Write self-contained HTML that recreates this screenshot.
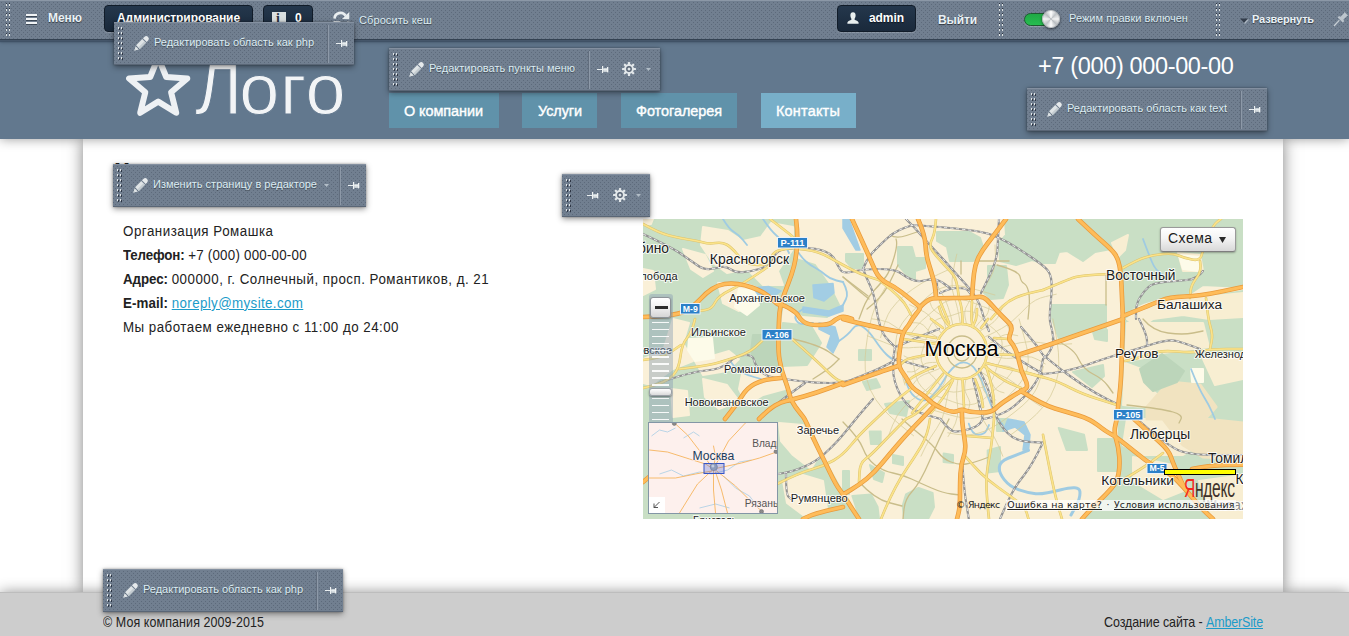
<!DOCTYPE html>
<html lang="ru">
<head>
<meta charset="utf-8">
<title>Контакты</title>
<style>
*{box-sizing:border-box;margin:0;padding:0}
html,body{width:1349px;height:636px;overflow:hidden;background:#fff}
body{position:relative;font-family:"Liberation Sans",sans-serif;color:#222}
.abs{position:absolute}
.t{position:absolute;white-space:nowrap;line-height:1;display:block}
/* dotted admin texture */
.tex{background-color:#717f90;
 background-image:conic-gradient(from 270deg at 1px 1px,#5d6a7b 90deg,transparent 0),conic-gradient(from 270deg at 1px 1px,#5d6a7b 90deg,transparent 0);
 background-size:4px 4px,4px 4px}
/* site header */
#hdr{left:0;top:0;width:1349px;height:139px;background:#62788e;box-shadow:0 0 11px rgba(0,0,0,.4)}
#wrap{left:83px;top:139px;width:1200px;height:453px;background:#fff;box-shadow:0 0 15px rgba(0,0,0,.5)}
#foot{left:0;top:592px;width:1349px;height:44px;background:#cdcdcd;border-top:1px solid #bdbdbd;box-shadow:0 0 14px rgba(0,0,0,.42)}
/* top admin panel */
#panel{left:0;top:0;width:1349px;height:39px;background-position:1px 1px,3px 3px;border-top:1px solid #8c98a7;box-shadow:0 1px 0 #344252,0 2px 0 #45566a,0 3px 1px rgba(60,78,98,.8),0 4px 3px rgba(60,78,98,.5)}
.hd{position:absolute;width:5px;
 background-image:linear-gradient(#e2e6e8 2px,transparent 2px),linear-gradient(#e2e6e8 2px,transparent 2px),linear-gradient(#2e3644 2px,transparent 2px),linear-gradient(#2e3644 2px,transparent 2px);
 background-size:1px 5px;background-repeat:repeat-y;background-position:0 0,3px 0,1px 1px,4px 1px}
.ph{position:absolute;width:4px;top:2px;height:35px;
 background-image:linear-gradient(#2f3845 1px,#dfe4e4 1px,#dfe4e4 3px,transparent 3px),linear-gradient(#2f3845 1px,#dfe4e4 1px,#dfe4e4 3px,transparent 3px);
 background-size:1px 5px;background-repeat:repeat-y;background-position:0 0,3px 0}
.btn{position:absolute;border-radius:4px;background:linear-gradient(#24374c,#1a293b);border:1px solid #111c29;box-shadow:0 1px 0 rgba(255,255,255,.18)}
.pb{font-weight:bold;font-size:12px;color:#e9f1f6;text-shadow:0 1px 1px rgba(0,0,0,.55)}
.pr{font-size:11px;color:#dcecf3;text-shadow:0 1px 1px rgba(0,0,0,.45)}
/* floating toolbars */
.tb{position:absolute;height:43px;border-top:1px solid #8490a0;border-bottom:1px solid #5a6676;box-shadow:0 2px 6px rgba(0,0,0,.42),0 0 2px rgba(0,0,0,.3);background-position:0 1px,2px 3px}
.tb .sep{position:absolute;top:2px;width:2px;height:38px;background:linear-gradient(90deg,#626e7e 50%,#8d99a8 50%)}
.tb .lbl{position:absolute;top:12px;font-size:11px;color:#dcecf3;white-space:nowrap;line-height:14px;text-shadow:0 1px 1px rgba(0,0,0,.4)}
svg{position:absolute;overflow:visible}
/* site */
.nav{position:absolute;top:93px;height:35px;background:#6092aa;color:#fff;font-size:15.2px;-webkit-text-stroke:.4px #fff}
.nav span{position:absolute;top:9px;white-space:nowrap;line-height:17px;transform:scaleX(.95);transform-origin:0 0}
.ct{position:absolute;left:123px;font-size:15.5px;line-height:16px;transform:scaleX(.86);transform-origin:0 0;white-space:nowrap;color:#222}
.ct b{font-weight:bold}
a{color:#1b9bc9;text-decoration:underline}
</style>
<style id="fit">#p1{letter-spacing:-0.043px}
#p2{letter-spacing:-0.075px}
#p3{letter-spacing:0.312px}
#p4{letter-spacing:0.098px}
#p5{letter-spacing:-0.069px}
#p6{letter-spacing:-0.109px}
#p7{letter-spacing:0.042px}
#p8{letter-spacing:-0.142px}
#t1{letter-spacing:-0.008px}
#t2{letter-spacing:0.019px}
#t3{letter-spacing:0.013px}
#t4{letter-spacing:-0.006px}
#t6{letter-spacing:-0.008px}
#n1{letter-spacing:-0.061px}
#n2{letter-spacing:-0.067px}
#n3{letter-spacing:-0.040px}
#n4{letter-spacing:0.220px}
#phone{letter-spacing:-0.353px}
#c1{letter-spacing:0.604px}
#c2b{letter-spacing:-0.178px}
#c2s{letter-spacing:0.265px}
#c3b{letter-spacing:-0.063px}
#c3s{letter-spacing:0.579px}
#c4b{letter-spacing:0.091px}
#c4s{letter-spacing:0.448px}
#c5{letter-spacing:0.559px}
#f1{letter-spacing:0.105px}
#f2a{letter-spacing:-0.099px}
#f2b{letter-spacing:-0.158px}
#logo2{letter-spacing:0.745px}
#m1{letter-spacing:0.469px}
#m3{letter-spacing:-0.697px}
#m4{letter-spacing:0.254px}
#m5{letter-spacing:0.151px}</style>
</head>
<body>
<div id="wrap" class="abs"></div>
<div id="hdr" class="abs"></div>
<div id="foot" class="abs"></div>

<!-- site header content -->
<svg id="star" style="left:126px;top:53px" width="65" height="64" viewBox="0 0 65 64"><path d="M32.2 4.4 L40.2 24.0 L61.3 25.5 L45.1 39.2 L50.2 59.8 L32.2 48.6 L14.2 59.8 L19.3 39.2 L3.1 25.5 L24.2 24.0 Z" fill="none" stroke="#eef1f4" stroke-width="6" stroke-linejoin="round"/></svg>
<div id="logo" class="t" style="left:195px;top:49px;font-size:72px;line-height:80px;color:#f2f4f6;-webkit-text-stroke:1px #62788e"><span style="letter-spacing:-3px">Л</span><span id="logo2">ого</span></div>
<div class="nav" style="left:389px;width:110px"><span id="n1" style="left:15px">О компании</span></div>
<div class="nav" style="left:522px;width:75px"><span id="n2" style="left:16px">Услуги</span></div>
<div class="nav" style="left:621px;width:116px"><span id="n3" style="left:15px">Фотогалерея</span></div>
<div class="nav" style="left:761px;width:95px;background:#78afc9"><span id="n4" style="left:15px">Контакты</span></div>
<div id="phone" class="t" style="left:1038px;top:52px;font-size:23.5px;line-height:28px;color:#fff">+7 (000) 000-00-00</div>

<!-- content -->
<div id="h1" class="t" style="left:114px;top:158px;font-size:25px;font-weight:bold;line-height:28px;color:#222">Контакты</div>
<div class="ct" id="c1" style="top:223px">Организация Ромашка</div>
<div class="ct" id="c2" style="top:247px"><b id="c2b">Телефон:</b> <span id="c2s">+7 (000) 000-00-00</span></div>
<div class="ct" id="c3" style="top:271px"><b id="c3b">Адрес:</b> <span id="c3s">000000, г. Солнечный, просп. Романтиков, д. 21</span></div>
<div class="ct" id="c4" style="top:295px"><b id="c4b">E-mail:</b> <a id="c4s">noreply@mysite.com</a></div>
<div class="ct" id="c5" style="top:319px">Мы работаем ежедневно с 11:00 до 24:00</div>

<!-- MAP -->
<div id="map" class="abs" style="left:643px;top:219px;width:600px;height:300px;background:#faf0d8;overflow:hidden"><svg width="600" height="300" viewBox="0 0 600 300" style="left:0;top:0">
<rect width="600" height="300" fill="#faf0d8"/>
<polygon points="0,0 150,0 153,39 141,74 137,100 135,131 138,150 148,182 162,200 181,241 200,275 214,300 0,300" fill="#c9dfc5" stroke="#c9dfc5" stroke-width="3" stroke-linejoin="round"/>
<polygon points="0,0 10,0 8,5 0,6" fill="#faf0d8" stroke="#faf0d8" stroke-width="2" stroke-linejoin="round"/>
<polygon points="60,8 85,12 100,22 118,18 128,4 150,8 150,30 135,52 140,66 120,66 104,50 84,54 70,44 58,26" fill="#faf0d8" stroke="#faf0d8" stroke-width="2" stroke-linejoin="round"/>
<polygon points="40,30 62,36 70,52 60,58 48,50" fill="#faf0d8" stroke="#faf0d8" stroke-width="2" stroke-linejoin="round"/>
<polygon points="75,64 100,64 118,70 110,84 96,92 80,84" fill="#faf0d8" stroke="#faf0d8" stroke-width="2" stroke-linejoin="round"/>
<polygon points="0,50 10,52 12,70 0,76" fill="#faf0d8" stroke="#faf0d8" stroke-width="2" stroke-linejoin="round"/>
<polygon points="30,100 46,104 40,124 50,142 30,150 8,166 0,164 0,140 20,132" fill="#faf0d8" stroke="#faf0d8" stroke-width="2" stroke-linejoin="round"/>
<polygon points="52,142 86,132 96,140 84,152 60,156" fill="#faf0d8" stroke="#faf0d8" stroke-width="2" stroke-linejoin="round"/>
<polygon points="60,160 84,166 96,182 76,190 62,178" fill="#faf0d8" stroke="#faf0d8" stroke-width="2" stroke-linejoin="round"/>
<polygon points="100,150 134,150 142,170 120,176 104,186 96,170" fill="#faf0d8" stroke="#faf0d8" stroke-width="2" stroke-linejoin="round"/>
<polygon points="136,204 160,206 176,236 168,250 150,236 138,222" fill="#faf0d8" stroke="#faf0d8" stroke-width="2" stroke-linejoin="round"/>
<polygon points="140,262 160,256 180,262 184,290 160,296 144,284" fill="#faf0d8" stroke="#faf0d8" stroke-width="2" stroke-linejoin="round"/>
<polygon points="28,170 44,172 46,196 30,198" fill="#faf0d8" stroke="#faf0d8" stroke-width="2" stroke-linejoin="round"/>
<polygon points="153,40 172,46 186,66 196,86 184,98 160,96 141,86 141,74" fill="#c9dfc5" stroke="#c9dfc5" stroke-width="2" stroke-linejoin="round"/>
<polygon points="140,104 168,107 178,124 164,146 138,147 135,131" fill="#c9dfc5" stroke="#c9dfc5" stroke-width="2" stroke-linejoin="round"/>
<polygon points="203,35 220,35 220,49 209,49 203,42" fill="#c9dfc5" stroke="#c9dfc5" stroke-width="2" stroke-linejoin="round"/>
<polygon points="255,28 269,28 272,39 282,39 282,49 272,52 272,61 263,55 255,46" fill="#c9dfc5" stroke="#c9dfc5" stroke-width="2" stroke-linejoin="round"/>
<polygon points="294,13 326,13 337,19 341,31 330,42 307,42 304,28 294,22" fill="#c9dfc5" stroke="#c9dfc5" stroke-width="2" stroke-linejoin="round"/>
<polygon points="345,47 363,47 365,66 360,79 348,80 341,74 345,60" fill="#c9dfc5" stroke="#c9dfc5" stroke-width="2" stroke-linejoin="round"/>
<polygon points="362,0 600,0 600,68 560,66 548,74 526,76 500,84 482,92 479,60 475,39 468,30 452,33 440,42 424,32 416,33 412,44 400,44 389,41 373,46 357,42 356,24 363,16" fill="#c9dfc5" stroke="#c9dfc5" stroke-width="2" stroke-linejoin="round"/>
<polygon points="409,86 463,86 463,109 416,120 409,100" fill="#c9dfc5" stroke="#c9dfc5" stroke-width="2" stroke-linejoin="round"/>
<polygon points="450,113 464,111 464,122 452,120" fill="#c9dfc5" stroke="#c9dfc5" stroke-width="2" stroke-linejoin="round"/>
<polygon points="430,153 460,146 461,157 449,168" fill="#c9dfc5" stroke="#c9dfc5" stroke-width="2" stroke-linejoin="round"/>
<polygon points="216,131 228,131 228,141 216,141" fill="#c9dfc5" stroke="#c9dfc5" stroke-width="2" stroke-linejoin="round"/>
<polygon points="242,185 266,182 263,197 247,194" fill="#c9dfc5" stroke="#c9dfc5" stroke-width="2" stroke-linejoin="round"/>
<polygon points="220,163 233,160 237,168 224,171" fill="#c9dfc5" stroke="#c9dfc5" stroke-width="2" stroke-linejoin="round"/>
<polygon points="263,275.5 275.5,269 289.6,274 291,288 285,300 261,300 259.7,286.5" fill="#c9dfc5" stroke="#c9dfc5" stroke-width="2" stroke-linejoin="round"/>
<polygon points="200,252 206,252 206,275 200,275" fill="#c9dfc5" stroke="#c9dfc5" stroke-width="2" stroke-linejoin="round"/>
<polygon points="209.4,277 228,275.5 234.6,288 236,300 217,300" fill="#c9dfc5" stroke="#c9dfc5" stroke-width="2" stroke-linejoin="round"/>
<polygon points="226.7,212.6 237.7,212.6 237.7,225 228,225" fill="#c9dfc5" stroke="#c9dfc5" stroke-width="2" stroke-linejoin="round"/>
<polygon points="250,236 260,238 260,246 250,244" fill="#c9dfc5" stroke="#c9dfc5" stroke-width="2" stroke-linejoin="round"/>
<polygon points="227,246 241,254 239,263 231,260" fill="#c9dfc5" stroke="#c9dfc5" stroke-width="2" stroke-linejoin="round"/>
<polygon points="300.6,234.6 310,236 310,244 300.6,243" fill="#c9dfc5" stroke="#c9dfc5" stroke-width="2" stroke-linejoin="round"/>
<polygon points="344.7,231.4 357,228 357,252 344.7,253.5" fill="#c9dfc5" stroke="#c9dfc5" stroke-width="2" stroke-linejoin="round"/>
<polygon points="354,200 364,200 364,212 354,212" fill="#c9dfc5" stroke="#c9dfc5" stroke-width="2" stroke-linejoin="round"/>
<polygon points="482,92 600,72 600,300 440,300 447,291 463,275.5 474,263 477,247 475,188 478,163 479,131" fill="#c9dfc5" stroke="#c9dfc5" stroke-width="2" stroke-linejoin="round"/>
<polygon points="455,220 488,220 488,247 477,252 455,252" fill="#c9dfc5" stroke="#c9dfc5" stroke-width="2" stroke-linejoin="round"/>
<polygon points="415.7,209 441,215.7 444,231 423.6,231" fill="#c9dfc5" stroke="#c9dfc5" stroke-width="2" stroke-linejoin="round"/>
<polygon points="570,100 600,100 600,128 573,128" fill="#c9dfc5" stroke="#c9dfc5" stroke-width="2" stroke-linejoin="round"/>
<polygon points="469,24 485,16 482,31 475,38" fill="#f8eed2" stroke="#f8eed2" stroke-width="2" stroke-linejoin="round"/>
<polygon points="500,88 560,78 600,74 600,98 566,100 540,96 510,100 496,110 484,100" fill="#f8eed2" stroke="#f8eed2" stroke-width="2" stroke-linejoin="round"/>
<polygon points="484,104 560,104 566,128 520,134 497,140 482,142" fill="#f8eed2" stroke="#f8eed2" stroke-width="2" stroke-linejoin="round"/>
<polygon points="482,144 498,150 501,163 510,172 520,180 500,188 480,186" fill="#f8eed2" stroke="#f8eed2" stroke-width="2" stroke-linejoin="round"/>
<polygon points="535,34 557,36 560,52 540,52" fill="#f8eed2" stroke="#f8eed2" stroke-width="2" stroke-linejoin="round"/>
<polygon points="484,200 540,200 556,226 540,236 500,236 480,226" fill="#f8eed2" stroke="#f8eed2" stroke-width="2" stroke-linejoin="round"/>
<polygon points="490,238 530,246 545,270 520,280 490,262" fill="#f8eed2" stroke="#f8eed2" stroke-width="2" stroke-linejoin="round"/>
<polygon points="560,140 600,136 600,160 572,166" fill="#f8eed2" stroke="#f8eed2" stroke-width="2" stroke-linejoin="round"/>
<polygon points="556,262 600,256 600,300 570,300" fill="#f8eed2" stroke="#f8eed2" stroke-width="2" stroke-linejoin="round"/>
<polygon points="526,163 557,166 573,188 562,200 600,204 600,240 560,238 540,226 520,200 504,200 504,188" fill="#f1e3c0" stroke="#f1e3c0" stroke-width="3" stroke-linejoin="round"/>
<polygon points="110,116 134,116 135,147 114,148 108,132" fill="#bcd5ba" stroke="#bcd5ba" stroke-width="2" stroke-linejoin="round"/>
<polygon points="497,150 519,135 541,152 534,163 510,172 501,163" fill="#bcd5ba" stroke="#bcd5ba" stroke-width="2" stroke-linejoin="round"/>
<polygon points="46,120 69,119 71,139 52,142 45,131" fill="#fdfbe9" stroke="#fdfbe9" stroke-width="2" stroke-linejoin="round"/>
<polygon points="96,70 112,72 116,86 104,96 92,88" fill="#fdfbe9" stroke="#fdfbe9" stroke-width="2" stroke-linejoin="round"/>
<polygon points="548,150 560,150 560,163 549,163" fill="#fdfbe9" stroke="#fdfbe9" stroke-width="2" stroke-linejoin="round"/>
<polygon points="536,36 556,38 556,52 540,50" fill="#fdfbe9" stroke="#fdfbe9" stroke-width="2" stroke-linejoin="round"/>
<polygon points="200,0 206,0 217,31 213,31 200,9" fill="#a2cde4" stroke="#a2cde4" stroke-width="1.5" stroke-linejoin="round"/>
<polygon points="365,200 381,203 387,215.7 385.5,231.4 380,231 382,216 372,208 360,212" fill="#a2cde4" stroke="#a2cde4" stroke-width="1.5" stroke-linejoin="round"/>
<polygon points="170,66 190,64.5 191,74 181,82 171,78.6" fill="#a2cde4" stroke="#a2cde4" stroke-width="1.5" stroke-linejoin="round"/>
<polygon points="110,68.5 126,67.6 138,72 129,78.6 116,77" fill="#a2cde4" stroke="#a2cde4" stroke-width="1.5" stroke-linejoin="round"/>
<polygon points="160,88 186,92 200,86 200,92 186,97 160,93" fill="#a2cde4" stroke="#a2cde4" stroke-width="1.5" stroke-linejoin="round"/>
<polygon points="176,104 192,108 196,122 190,134 184,128 188,116 176,110" fill="#a2cde4" stroke="#a2cde4" stroke-width="1.5" stroke-linejoin="round"/>
<g fill="none" stroke-linecap="round" stroke-linejoin="round">
<g stroke="#9fcbe2" stroke-width="1.8">
<path d="M155.6 33.8 Q159 39 163 42.5 Q167 46 172.5 49 Q178 52 182.5 56 Q187 60 193.5 61.5 L200 63"/>
<path d="M200 63 Q206 74 203 80 L200 86"/>
<path d="M160 90 Q150 96 153 101 Q156 106 163 105 L170 104"/>
<path d="M196 122 Q205 116 209.5 110 Q214 104 220 108 Q226 112 232 121 Q238 130 243 135 Q248 140 252 141 L256 142"/>
<path d="M256 142 Q262 160 265 168 Q268 176 275 180 Q282 184 289 177 Q296 170 301 161 Q306 152 312 147 Q318 142 324 144 Q330 146 334 153 L338 160"/>
<path d="M338 160 Q344 176 348 186 Q352 196 356 201 L360 206"/>
<path d="M385.5 231.4 Q373 236 365 239.25 Q357 242.5 356.35 248 Q355.7 253.5 361.2 260.55 Q366.7 267.6 376.1 270.8 Q385.5 274 392.75 274.75 Q400 275.5 418 270.75 Q436 266 436.85 272.3 Q437.7 278.6 432.85 287.3 L428 296" stroke-width="3"/>
<path d="M325.8 204.7 Q329 215.7 335.25 215.7 Q341.5 215.7 343.75 210.85 L346 206"/>
<path d="M80 0 Q86 10 91 13 Q96 16 100 21 L104 26"/>
<path d="M120 0 Q128 12 134 17 Q140 22 143 28 L146 34"/>
<path d="M86 140 Q92 150 98 153 Q104 156 111 158 L118 160"/>
<path d="M500 20 Q506 36 509 43 Q512 50 516 53 L520 56"/>
<path d="M548 150 Q556 170 561 178 Q566 186 569 193 L572 200"/>
</g>
<g stroke="#c9bd8a" stroke-width="1.3">
<path d="M247 16 Q253 20 263.5 16.5 L274 13"/>
<path d="M253 20 Q255 25 251 38.5 Q247 52 243 57.5 Q239 63 231.5 71 Q224 79 220 89.5 L216 100"/>
<path d="M200 58 L225 77"/>
<path d="M318 42 L318 55"/>
<path d="M354 46 Q376 52 377 57.5 Q378 63 381 64.5 Q384 66 385.5 72.5 Q387 79 386 89.5 L385 100"/>
<path d="M200 203 Q216 219 220 229.5 Q224 240 232 246 Q240 252 250 254 Q260 256 268.5 260 Q277 264 288.5 269 Q300 274 308.5 275 L317 276"/>
<path d="M259 200 Q270 210 280 218 Q290 226 295 233 Q300 240 308 243 Q316 246 323 245 Q330 244 338 241 L346 238"/>
<path d="M306 200 Q296 220 286.5 242 Q277 264 269.5 272 Q262 280 261 290 L260 300"/>
<path d="M216 263 Q232 280 245.5 283.5 L259 287"/>
<path d="M255 46 Q246 66 241 73 Q236 80 230 85 L224 90"/>
<path d="M200 58 Q216 72 221 76 L226 80"/>
<path d="M332 42 L366 42"/>
<path d="M409 120 Q430 128 435 139 Q440 150 450 155 Q460 160 465 167 L470 174"/>
<path d="M463 55 L463 86"/>
<path d="M500 100 Q510 112 525 114 Q540 116 550 114 L560 112"/>
<path d="M484 186 Q520 190 530 193 Q540 196 538 200 L536 204"/>
<path d="M150 120 Q176 126 186 133 L196 140"/>
<path d="M170 160 Q186 150 191 145 L196 140"/>
<ellipse cx="319" cy="133" rx="15" ry="16"/><ellipse cx="319" cy="134" rx="8" ry="8"/>
</g>
<g stroke="#d6cb98" stroke-width=".8" opacity=".9">
<path d="M346.8 136.1 Q360.4 140.2 367.55 139.3 Q374.7 138.4 381.8 137.65 Q388.9 136.9 395.55 140.9 L402.2 144.9"/>
<path d="M345 143.7 Q355 146.8 360.55 146.75 Q366.1 146.7 370.75 149.5 Q375.4 152.3 379.5 156.35 L383.6 160.4"/>
<path d="M341.9 149.4 Q357.9 156.1 365.45 160.05 Q373 164 378.55 171.35 Q384.1 178.7 391.35 183.25 L398.6 187.8"/>
<path d="M338.7 153.3 Q345.6 157 347.45 160.6 Q349.3 164.2 351 167.8 Q352.7 171.4 356.85 172.6 L361 173.8"/>
<path d="M335 156.4 Q338.9 163 339.45 167.15 Q340 171.3 342.55 174.2 Q345.1 177.1 348.95 179.1 L352.8 181.1"/>
<path d="M329.8 159.3 Q334 180 336.3 190.25 Q338.6 200.5 345.25 209.2 Q351.9 217.9 355.85 227.55 L359.8 237.2"/>
<path d="M322.7 161.3 Q321 169.2 322.4 172.9 Q323.8 176.6 325.75 180.15 Q327.7 183.7 326.25 187.8 L324.8 191.9"/>
<path d="M314.8 161.2 Q312.7 175.4 314.15 182.7 Q315.6 190 314.4 197.1 Q313.2 204.2 309.15 210.85 L305.1 217.5"/>
<path d="M308.3 159.4 Q303.8 180 301.9 190.35 Q300 200.7 293.55 209.5 Q287.1 218.3 282.55 227.7 L278 237.1"/>
<path d="M303.6 156.8 Q301.9 164.8 299.25 167.6 Q296.6 170.4 293.15 172.7 Q289.7 175 289.1 179.15 L288.5 183.3"/>
<path d="M299.9 153.9 Q286.4 169.6 277.3 175.1 Q268.2 180.6 260.95 188 Q253.7 195.4 249.65 206 L245.6 216.6"/>
<path d="M296.3 149.7 Q286.3 153.7 281.2 155.45 Q276.1 157.2 272.75 161.9 Q269.4 166.6 265.6 170.4 L261.8 174.2"/>
<path d="M292.9 143.4 Q284.9 143.2 281.55 145 Q278.2 146.8 275.3 149.9 Q272.4 153 268.4 152.9 L264.4 152.8"/>
<path d="M291.1 135.5 Q283.6 135.3 280.05 137.5 Q276.5 139.7 272.8 140.35 Q269.1 141 265.1 138.95 L261.1 136.9"/>
<path d="M291.4 128.2 Q274.3 127.9 265.7 128.85 Q257.1 129.8 248.85 126.4 Q240.6 123 232.45 119.9 L224.3 116.8"/>
<path d="M292.9 122.6 Q275.8 120.1 267.85 116.95 Q259.9 113.8 252.95 108.05 Q246 102.3 237.35 101.05 L228.7 99.8"/>
<path d="M295 118.3 Q287.9 115.5 285.6 112.05 Q283.3 108.6 280.4 106.15 Q277.5 103.7 273 103.75 L268.5 103.8"/>
<path d="M298.1 114 Q291.5 105.5 288.95 100.6 Q286.4 95.7 281.5 93.1 Q276.6 90.5 271.6 88.1 L266.6 85.7"/>
<path d="M303 109.6 Q301.4 101.5 299.35 98.35 Q297.3 95.2 293.55 93.1 Q289.8 91 288.45 87.3 L287.1 83.6"/>
<path d="M309.9 106 Q305.5 85.5 300 76.35 Q294.5 67.2 289.7 57.9 Q284.9 48.6 285.6 37.25 L286.3 25.9"/>
<path d="M317.3 104.5 Q314.6 87.3 311.45 79 Q308.3 70.7 309.05 61.85 Q309.8 53 311.8 44.1 L313.8 35.2"/>
<path d="M323.5 104.8 Q321.5 96.9 321.75 93.05 Q322 89.2 324.5 85.65 Q327 82.1 326.95 78.25 L326.9 74.4"/>
<path d="M328.2 106 Q332.2 85.4 337.45 76.15 Q342.7 66.9 347.85 57.75 Q353 48.6 352.5 37.3 L352 26"/>
<path d="M332.6 108 Q337.1 101.8 340.45 99.5 Q343.8 97.2 345 93.4 Q346.2 89.6 346.45 85.3 L346.7 81"/>
<path d="M337.6 111.7 Q347 106.1 351.05 102.65 Q355.1 99.2 357.1 93.65 Q359.1 88.1 362.85 84.4 L366.6 80.7"/>
<path d="M342.6 117.6 Q361.5 109.1 369.3 102.05 Q377.1 95 384.45 87.45 Q391.8 79.9 402.55 77.55 L413.3 75.2"/>
<path d="M345.8 124.7 Q352.8 122.1 355.75 119.15 Q358.7 116.2 362.5 115.6 Q366.3 115 370.5 115.85 L374.7 116.7"/>
<path d="M347 131.4 Q367 126.1 377.05 123.75 Q387.1 121.4 397.65 123.7 Q408.2 126 418.45 125.4 L428.7 124.8"/>
<path d="M360.6 133 Q357.2 141.1 355.4 144.75 Q353.6 148.4 352.4 152.4 Q351.2 156.4 349.15 160.35 Q347.1 164.3 343.35 166.55 Q339.6 168.8 335.25 169.25 Q330.9 169.7 326.95 170.25 Q323 170.8 318.9 171.95 Q314.8 173.1 310.4 173.1 Q306 173.1 302.3 170.75 Q298.6 168.4 296 164.95 Q293.4 161.5 290.75 158.5 Q288.1 155.5 284.95 152.55 Q281.8 149.6 279.75 145.7 Q277.7 141.8 278.15 137.4 Q278.6 133 280.2 129.05 Q281.8 125.1 282.8 121.2 Q283.8 117.3 284.75 113.05 Q285.7 108.8 288.25 105.25 Q290.8 101.7 294.9 100.05 Q299 98.4 303.15 97.7 Q307.3 97 311.1 95.65 Q314.9 94.3 319.1 93 Q323.3 91.7 327.65 92.4 Q332 93.1 335.35 95.95 Q338.7 98.8 341.5 101.85 Q344.3 104.9 347.55 107.4 Q350.8 109.9 354 112.95 Q357.2 116 358.45 120.15 Q359.7 124.3 358.85 128.65 L358 133"/>
<path d="M369.9 151.5 Q363.1 161.1 358.7 164.7 Q354.3 168.3 350.25 172 Q346.2 175.7 341.7 179.4 Q337.2 183.1 331.65 184.85 Q326.1 186.6 320.3 185.6 Q314.5 184.6 309.25 182.55 Q304 180.5 298.75 178.85 Q293.5 177.2 288.1 174.9 Q282.7 172.6 278.8 168.25 Q274.9 163.9 273.25 158.25 Q271.6 152.6 270.8 147.1 L270 141.6"/>
<path d="M268.1 114.5 Q275.1 104.8 279.55 101.1 Q284 97.4 288.15 93.65 Q292.3 89.9 296.95 86.25 Q301.6 82.6 307.3 80.95 Q313 79.3 318.85 80.45 Q324.7 81.6 330 83.75 Q335.3 85.9 340.6 87.75 Q345.9 89.6 351.3 92.15 Q356.7 94.7 360.5 99.3 Q364.3 103.9 365.75 109.7 L367.2 115.5"/>
<path d="M376.1 100 Q379.9 113.8 381.8 120.55 Q383.7 127.3 384.85 134.55 Q386 141.8 384.4 149 Q382.8 156.2 378.5 162.2 Q374.2 168.2 369.15 173.15 Q364.1 178.1 359.1 183.1 Q354.1 188.1 348.15 192.45 Q342.2 196.8 335 198.45 Q327.8 200.1 320.55 198.95 Q313.3 197.8 306.55 195.85 Q299.8 193.9 292.95 191.95 L286.1 190"/>
<path d="M261.9 166 Q258.1 152.2 256.2 145.45 Q254.3 138.7 253.15 131.45 Q252 124.2 253.6 117 Q255.2 109.8 259.5 103.8 Q263.8 97.8 268.85 92.85 Q273.9 87.9 278.9 82.9 Q283.9 77.9 289.85 73.55 Q295.8 69.2 303 67.55 Q310.2 65.9 317.45 67.05 Q324.7 68.2 331.45 70.15 Q338.2 72.1 345.05 74.05 L351.9 76"/>
<path d="M400.4 147.4 Q396.6 165.7 391.3 173.45 Q386 181.2 379 187.1 Q372 193 364.75 198.35 Q357.5 203.7 349.5 208.35 Q341.5 213 332.35 215 Q323.2 217 314 215.4 L304.8 213.8"/>
<path d="M237.6 118.6 Q242.1 98.8 248.05 90.5 Q254 82.2 261.85 76.05 Q269.7 69.9 278 64.7 Q286.3 59.5 295.45 55.3 L304.6 51.1"/>
<path d="M409.9 99.9 Q414.3 121.9 415.4 133.15 Q416.5 144.4 414.8 155.85 Q413.1 167.3 407.4 177.35 Q401.7 187.4 393.4 195.25 Q385.1 203.1 376.1 209.7 L367.1 216.3"/>
<path d="M270.6 216.8 Q254.2 203.7 246.4 196.5 Q238.6 189.3 232.55 180.3 Q226.5 171.3 224 160.75 Q221.5 150.2 222.1 139.5 Q222.7 128.8 224.4 118.45 Q226.1 108.1 228.8 97.8 Q231.5 87.5 236.85 78.05 L242.2 68.6"/>
</g>
<g stroke="#939393" stroke-width="2.2">
<path d="M346 118 Q360 130 369 136 Q378 142 389 148.5 L400 155"/>
<path d="M296 110 Q280 116 271 120 Q262 124 257 126 L252 128"/>
<path d="M290 150 Q272 146 263 143 L254 140"/>
<path d="M252 128 Q248 150 252 163 Q256 176 263 184 Q270 192 283.75 196 L297.5 200"/>
<path d="M341 200 Q360 196 370 188 Q380 180 388 170 Q396 160 398 150 L400 140"/>
<path d="M336 150 Q346 170 348 180 Q350 190 353.5 198 Q357 206 364.5 214 Q372 222 386 222.8 L400 223.6"/>
<path d="M0 15 Q28 28 37.5 34.5 Q47 41 54 46 Q61 51 67.5 50 Q74 49 78.5 48 Q83 47 88 50.5 Q93 54 101.5 53 Q110 52 118 49.5 Q126 47 130 39 Q134 31 142.5 30 Q151 29 162 29 Q173 29 181 32 Q189 35 192 41 Q195 47 197.5 51 Q200 55 210 52.5 Q220 50 236 50 Q252 50 257.5 54 Q263 58 268.5 60.5 Q274 63 281 61.5 Q288 60 292 60.5 Q296 61 301.5 65 L307 69"/>
<path d="M220 50 Q224 60 227.5 67.5 Q231 75 233 87.5 Q235 100 237.5 108 Q240 116 246 122 L252 128"/>
<path d="M263 0 Q271 8 278 16 Q285 24 293 32.5 Q301 41 308.5 49.5 Q316 58 322.5 65 Q329 72 333 78.5 Q337 85 339 92.5 Q341 100 343.5 106 L346 112"/>
<path d="M271 6 Q310 9 325.5 11 Q341 13 349 16 Q357 19 365 23.5 Q373 28 386.5 37 Q400 46 404 50.5 Q408 55 408.5 63 Q409 71 407.5 85.5 Q406 100 407.5 105 Q409 110 410 117 Q411 124 408 130 Q405 136 402.5 138 L400 140"/>
<path d="M356 0 Q355 20 354.5 29.5 Q354 39 350 48.5 Q346 58 342 66 L338 74"/>
<path d="M220 50 Q224 39 231.5 31.5 Q239 24 244.5 19 Q250 14 256.5 11 Q263 8 267 7 L271 6"/>
<path d="M294 61 L294 79"/>
<path d="M297 74 Q307 69 315 69 Q323 69 325 71.5 L327 74"/>
<path d="M560 52 Q554 60 544 61 Q534 62 522 63 Q510 64 505.5 68 Q501 72 497 78.5 Q493 85 493 92.5 L493 100"/>
<path d="M16 164 Q47 153 63 151.5 Q79 150 86.5 143 Q94 136 102 136 Q110 136 111 141 Q112 146 117.5 152 Q123 158 136 159.5 Q149 161 161 162.5 Q173 164 186.5 164 Q200 164 208 161 Q216 158 228 153 Q240 148 247 144 L254 140"/>
<path d="M116 200 Q141 179 151.5 171.5 L162 164"/>
<path d="M400 155 Q424 153 443.5 146 Q463 139 478.5 134.5 Q494 130 510 125 Q526 120 533.5 122 Q541 124 549 127 L557 130"/>
<path d="M400 136 Q416 149 423.5 154.5 Q431 160 441.5 167 Q452 174 463 179.5 L474 185"/>
<path d="M496 100 Q504 116 504 121.5 L504 127"/>
<path d="M135 255 Q149 253 161 247.75 Q173 242.5 181 235.25 Q189 228 194.5 222 Q200 216 208 206 Q216 196 223 188 L230 180"/>
<path d="M143 255 Q143 275.5 145.5 277.75 L148 280"/>
<path d="M297.5 200 Q307 212.6 312.5 212.6 Q318 212.6 325.8 210.3 Q333.6 208 337.3 204 Q341 200 338.5 193 L336 186"/>
<path d="M319.5 247 Q321 270.7 323.4 285.35 L325.8 300"/>
<path d="M400 223.6 Q388.7 247 380.85 256.5 Q373 266 368.25 275.5 Q363.5 285 360.25 292.5 L357 300"/>
<path d="M497.5 203 Q525.8 228 537.4 232 Q549 236 574.5 236 L600 236"/>
<path d="M378 108 Q392 124 396 130 L400 136"/>
<path d="M330 160 Q334 176 336 184 L338 192"/>
</g><g stroke="#f6f6f6" stroke-width="0.9" stroke-dasharray="3.2 2.8" stroke-linecap="butt">
<path d="M346 118 Q360 130 369 136 Q378 142 389 148.5 L400 155"/>
<path d="M296 110 Q280 116 271 120 Q262 124 257 126 L252 128"/>
<path d="M290 150 Q272 146 263 143 L254 140"/>
<path d="M252 128 Q248 150 252 163 Q256 176 263 184 Q270 192 283.75 196 L297.5 200"/>
<path d="M341 200 Q360 196 370 188 Q380 180 388 170 Q396 160 398 150 L400 140"/>
<path d="M336 150 Q346 170 348 180 Q350 190 353.5 198 Q357 206 364.5 214 Q372 222 386 222.8 L400 223.6"/>
<path d="M0 15 Q28 28 37.5 34.5 Q47 41 54 46 Q61 51 67.5 50 Q74 49 78.5 48 Q83 47 88 50.5 Q93 54 101.5 53 Q110 52 118 49.5 Q126 47 130 39 Q134 31 142.5 30 Q151 29 162 29 Q173 29 181 32 Q189 35 192 41 Q195 47 197.5 51 Q200 55 210 52.5 Q220 50 236 50 Q252 50 257.5 54 Q263 58 268.5 60.5 Q274 63 281 61.5 Q288 60 292 60.5 Q296 61 301.5 65 L307 69"/>
<path d="M220 50 Q224 60 227.5 67.5 Q231 75 233 87.5 Q235 100 237.5 108 Q240 116 246 122 L252 128"/>
<path d="M263 0 Q271 8 278 16 Q285 24 293 32.5 Q301 41 308.5 49.5 Q316 58 322.5 65 Q329 72 333 78.5 Q337 85 339 92.5 Q341 100 343.5 106 L346 112"/>
<path d="M271 6 Q310 9 325.5 11 Q341 13 349 16 Q357 19 365 23.5 Q373 28 386.5 37 Q400 46 404 50.5 Q408 55 408.5 63 Q409 71 407.5 85.5 Q406 100 407.5 105 Q409 110 410 117 Q411 124 408 130 Q405 136 402.5 138 L400 140"/>
<path d="M356 0 Q355 20 354.5 29.5 Q354 39 350 48.5 Q346 58 342 66 L338 74"/>
<path d="M220 50 Q224 39 231.5 31.5 Q239 24 244.5 19 Q250 14 256.5 11 Q263 8 267 7 L271 6"/>
<path d="M294 61 L294 79"/>
<path d="M297 74 Q307 69 315 69 Q323 69 325 71.5 L327 74"/>
<path d="M560 52 Q554 60 544 61 Q534 62 522 63 Q510 64 505.5 68 Q501 72 497 78.5 Q493 85 493 92.5 L493 100"/>
<path d="M16 164 Q47 153 63 151.5 Q79 150 86.5 143 Q94 136 102 136 Q110 136 111 141 Q112 146 117.5 152 Q123 158 136 159.5 Q149 161 161 162.5 Q173 164 186.5 164 Q200 164 208 161 Q216 158 228 153 Q240 148 247 144 L254 140"/>
<path d="M116 200 Q141 179 151.5 171.5 L162 164"/>
<path d="M400 155 Q424 153 443.5 146 Q463 139 478.5 134.5 Q494 130 510 125 Q526 120 533.5 122 Q541 124 549 127 L557 130"/>
<path d="M400 136 Q416 149 423.5 154.5 Q431 160 441.5 167 Q452 174 463 179.5 L474 185"/>
<path d="M496 100 Q504 116 504 121.5 L504 127"/>
<path d="M135 255 Q149 253 161 247.75 Q173 242.5 181 235.25 Q189 228 194.5 222 Q200 216 208 206 Q216 196 223 188 L230 180"/>
<path d="M143 255 Q143 275.5 145.5 277.75 L148 280"/>
<path d="M297.5 200 Q307 212.6 312.5 212.6 Q318 212.6 325.8 210.3 Q333.6 208 337.3 204 Q341 200 338.5 193 L336 186"/>
<path d="M319.5 247 Q321 270.7 323.4 285.35 L325.8 300"/>
<path d="M400 223.6 Q388.7 247 380.85 256.5 Q373 266 368.25 275.5 Q363.5 285 360.25 292.5 L357 300"/>
<path d="M497.5 203 Q525.8 228 537.4 232 Q549 236 574.5 236 L600 236"/>
<path d="M378 108 Q392 124 396 130 L400 136"/>
<path d="M330 160 Q334 176 336 184 L338 192"/>
</g>
<g stroke="#dcc36c" stroke-width="2.6">
<path d="M351 119 L365 120"/>
<path d="M343 135 L373 136"/>
<path d="M341.5 147 Q357 160 367.5 164.5 L378 169"/>
<path d="M332 160 Q338 174 339 181 L340 188"/>
<path d="M310 161 Q304 174 296 184 L288 194"/>
<path d="M293 147 Q274 155 268.5 159 L263 163"/>
<path d="M294 125 Q274 122 267 121 L260 120"/>
<path d="M307 108 Q300 100 298 94 L296 88"/>
<path d="M319.5 105 Q319.5 92 317.75 85.5 L316 79"/>
<path d="M330.5 106 Q333.6 100 333.8 95 L334 90"/>
<path d="M236 61 Q250 72 256 78 Q262 84 265 90 L268 96"/>
<path d="M400 158 L378 152"/>
<path d="M0 5 Q16 14 26 16.5 Q36 19 45.5 20.5 Q55 22 60.5 23.5 Q66 25 72.5 24 Q79 23 83.5 25.5 Q88 28 94 35 Q100 42 105 44 Q110 46 118 46 Q126 46 128 39.5 Q130 33 135.5 31.5 Q141 30 146 29.5 L151 29"/>
<path d="M127 0 Q148 16 150 18 L152 20"/>
<path d="M156 30 Q173 31 186.5 38.5 Q200 46 208.5 50.5 Q217 55 226.5 58 L236 61"/>
<path d="M126 47 Q102 64 88.5 70.5 Q75 77 72 83.5 Q69 90 62.5 91 L56 92"/>
<path d="M293 0 Q292 14 289.5 19 Q287 24 287.5 27.5 Q288 31 295 39 Q302 47 307.5 52.5 Q313 58 314.5 68.5 L316 79"/>
<path d="M297 82 Q302 94 304 99 L306 104"/>
<path d="M329 82 Q328 100 329 104 L330 108"/>
<path d="M400 71 Q381 75 373 78.5 Q365 82 359.5 87.5 Q354 93 351 96.5 L348 100"/>
<path d="M400 71 Q424 61 429.5 59 Q435 57 449 56 Q463 55 470.5 55 L478 55"/>
<path d="M480 49 Q494 41 502 38.5 Q510 36 520 35 Q530 34 535.5 36.5 Q541 39 549 40.5 Q557 42 558.5 36.5 Q560 31 565 18.5 Q570 6 574 3 L578 0"/>
<path d="M557 42 Q559 52 553.5 59 Q548 66 547.5 72.5 L547 79"/>
<path d="M563 79 Q565 100 567.5 108 Q570 116 568.5 123 L567 130"/>
<path d="M52 100 Q49 113 44 119 Q39 125 37.5 137 Q36 149 31.5 154.5 Q27 160 20 163 Q13 166 6.5 167.5 L0 169"/>
<path d="M36 150 Q63 147 74 144 Q85 141 96 137 Q107 133 113 127.5 L119 122"/>
<path d="M0 141 Q19 139 28.5 132.5 L38 126"/>
<path d="M149 120 Q173 141 182.5 150.5 Q192 160 196 161.5 L200 163"/>
<path d="M135 264.5 Q157 253.5 169 250.25 Q181 247 190.5 241.5 Q200 236 208 226 Q216 216 224.5 208 Q233 200 242.5 191 Q252 182 260.5 175.5 L269 169"/>
<path d="M263 200 Q247 216 237.5 226 Q228 236 222.5 240 Q217 244 216.5 253.5 L216 263"/>
<path d="M287 200 Q285 216 278 227.5 Q271 239 264.5 248.5 Q258 258 252.5 268.3 Q247 278.6 242.5 289.3 L238 300"/>
<path d="M351 200 Q349 223.6 346.85 235.3 Q344.7 247 343.85 255 Q343 263 343.85 275.5 Q344.7 288 345.35 294 L346 300"/>
<path d="M322.6 237.7 Q330.5 247 337.6 254 Q344.7 261 354.85 268.25 Q365 275.5 373.5 281.75 Q382 288 383.75 294 L385.5 300"/>
<path d="M324 217 L349 219"/>
<path d="M343 144 Q400 158 408 160.5 Q416 163 427.5 169 Q439 175 456.5 180.5 L474 186"/>
<path d="M343 147 Q351 171 351 185.5 L351 200"/>
<path d="M310 160 Q294 175 284.5 184.5 Q275 194 269 197 L263 200"/>
<path d="M300 155 Q288 170 278.5 182 L269 194"/>
<path d="M319.5 160 L321 188"/>
<path d="M293 135 Q266 138 261.5 142 L257 146"/>
<path d="M293 119 L263 114"/>
<path d="M300 109 L288 100"/>
<path d="M338 109 L345 100"/>
<path d="M482 142 Q497 139 506.5 135 Q516 131 533.5 132.5 Q551 134 559 132 Q567 130 583.5 130 L600 130"/>
<path d="M400 215.7 Q406 247 409.3 262.8 Q412.6 278.6 415.8 289.3 L419 300"/>
<path d="M481.7 259.7 Q500.6 248.7 510.3 241.35 L520 234"/>
<ellipse cx="318.5" cy="132.5" rx="25.5" ry="27.5"/>
</g><g stroke="#fbe38a" stroke-width="1.6">
<path d="M351 119 L365 120"/>
<path d="M343 135 L373 136"/>
<path d="M341.5 147 Q357 160 367.5 164.5 L378 169"/>
<path d="M332 160 Q338 174 339 181 L340 188"/>
<path d="M310 161 Q304 174 296 184 L288 194"/>
<path d="M293 147 Q274 155 268.5 159 L263 163"/>
<path d="M294 125 Q274 122 267 121 L260 120"/>
<path d="M307 108 Q300 100 298 94 L296 88"/>
<path d="M319.5 105 Q319.5 92 317.75 85.5 L316 79"/>
<path d="M330.5 106 Q333.6 100 333.8 95 L334 90"/>
<path d="M236 61 Q250 72 256 78 Q262 84 265 90 L268 96"/>
<path d="M400 158 L378 152"/>
<path d="M0 5 Q16 14 26 16.5 Q36 19 45.5 20.5 Q55 22 60.5 23.5 Q66 25 72.5 24 Q79 23 83.5 25.5 Q88 28 94 35 Q100 42 105 44 Q110 46 118 46 Q126 46 128 39.5 Q130 33 135.5 31.5 Q141 30 146 29.5 L151 29"/>
<path d="M127 0 Q148 16 150 18 L152 20"/>
<path d="M156 30 Q173 31 186.5 38.5 Q200 46 208.5 50.5 Q217 55 226.5 58 L236 61"/>
<path d="M126 47 Q102 64 88.5 70.5 Q75 77 72 83.5 Q69 90 62.5 91 L56 92"/>
<path d="M293 0 Q292 14 289.5 19 Q287 24 287.5 27.5 Q288 31 295 39 Q302 47 307.5 52.5 Q313 58 314.5 68.5 L316 79"/>
<path d="M297 82 Q302 94 304 99 L306 104"/>
<path d="M329 82 Q328 100 329 104 L330 108"/>
<path d="M400 71 Q381 75 373 78.5 Q365 82 359.5 87.5 Q354 93 351 96.5 L348 100"/>
<path d="M400 71 Q424 61 429.5 59 Q435 57 449 56 Q463 55 470.5 55 L478 55"/>
<path d="M480 49 Q494 41 502 38.5 Q510 36 520 35 Q530 34 535.5 36.5 Q541 39 549 40.5 Q557 42 558.5 36.5 Q560 31 565 18.5 Q570 6 574 3 L578 0"/>
<path d="M557 42 Q559 52 553.5 59 Q548 66 547.5 72.5 L547 79"/>
<path d="M563 79 Q565 100 567.5 108 Q570 116 568.5 123 L567 130"/>
<path d="M52 100 Q49 113 44 119 Q39 125 37.5 137 Q36 149 31.5 154.5 Q27 160 20 163 Q13 166 6.5 167.5 L0 169"/>
<path d="M36 150 Q63 147 74 144 Q85 141 96 137 Q107 133 113 127.5 L119 122"/>
<path d="M0 141 Q19 139 28.5 132.5 L38 126"/>
<path d="M149 120 Q173 141 182.5 150.5 Q192 160 196 161.5 L200 163"/>
<path d="M135 264.5 Q157 253.5 169 250.25 Q181 247 190.5 241.5 Q200 236 208 226 Q216 216 224.5 208 Q233 200 242.5 191 Q252 182 260.5 175.5 L269 169"/>
<path d="M263 200 Q247 216 237.5 226 Q228 236 222.5 240 Q217 244 216.5 253.5 L216 263"/>
<path d="M287 200 Q285 216 278 227.5 Q271 239 264.5 248.5 Q258 258 252.5 268.3 Q247 278.6 242.5 289.3 L238 300"/>
<path d="M351 200 Q349 223.6 346.85 235.3 Q344.7 247 343.85 255 Q343 263 343.85 275.5 Q344.7 288 345.35 294 L346 300"/>
<path d="M322.6 237.7 Q330.5 247 337.6 254 Q344.7 261 354.85 268.25 Q365 275.5 373.5 281.75 Q382 288 383.75 294 L385.5 300"/>
<path d="M324 217 L349 219"/>
<path d="M343 144 Q400 158 408 160.5 Q416 163 427.5 169 Q439 175 456.5 180.5 L474 186"/>
<path d="M343 147 Q351 171 351 185.5 L351 200"/>
<path d="M310 160 Q294 175 284.5 184.5 Q275 194 269 197 L263 200"/>
<path d="M300 155 Q288 170 278.5 182 L269 194"/>
<path d="M319.5 160 L321 188"/>
<path d="M293 135 Q266 138 261.5 142 L257 146"/>
<path d="M293 119 L263 114"/>
<path d="M300 109 L288 100"/>
<path d="M338 109 L345 100"/>
<path d="M482 142 Q497 139 506.5 135 Q516 131 533.5 132.5 Q551 134 559 132 Q567 130 583.5 130 L600 130"/>
<path d="M400 215.7 Q406 247 409.3 262.8 Q412.6 278.6 415.8 289.3 L419 300"/>
<path d="M481.7 259.7 Q500.6 248.7 510.3 241.35 L520 234"/>
<ellipse cx="318.5" cy="132.5" rx="25.5" ry="27.5"/>
</g>
<g stroke="#e99a3b" stroke-width="4.6">
<path d="M153 0 Q155 16 154 27.5 Q153 39 151 47 Q149 55 145.25 64.5 Q141.5 74 139.25 81 Q137 88 136.5 94 Q136 100 135.5 115.5 Q135 131 136.5 140.5 Q138 150 141.5 159.5 Q145 169 146.5 175.5 Q148 182 152.5 188 Q157 194 159.5 197 Q162 200 166 209.5 Q170 219 175.5 230 Q181 241 187 253.5 Q193 266 196.5 270.5 Q200 275 204 281.5 Q208 288 212 294 L216 300"/>
<path d="M435 0 Q452 16 460 23 Q468 30 471.5 34.5 Q475 39 476.5 47 Q478 55 478.5 67 Q479 79 479.5 89.5 Q480 100 479.5 115.5 Q479 131 478.5 147 Q478 163 476.5 175.5 Q475 188 474.5 194 Q474 200 472.35 206.3 Q470.7 212.6 473.1 220.3 Q475.5 228 476.25 237.5 Q477 247 475.5 255 Q474 263 468.5 269.25 Q463 275.5 455 283.25 Q447 291 443 295.5 L439 300"/>
<path d="M0 98 Q36 97 44.5 91 Q53 85 58 79.5 Q63 74 69 70 Q75 66 81.5 65 Q88 64 95 65 Q102 66 109 68.5 Q116 71 121 74 Q126 77 130.5 81.5 Q135 86 138 86 Q141 86 147.5 90 Q154 94 155.5 97 Q157 100 161 103 Q165 106 175.5 106 Q186 106 189.5 103 Q193 100 196.5 98.5 Q200 97 204.5 98.5 L209 100"/>
<path d="M209 0 Q220 24 224 33 Q228 42 232 51 Q236 60 244 64 Q252 68 259 73.5 Q266 79 271.5 83.5 L277 88"/>
<path d="M275 0 Q282 16 282.5 26 Q283 36 285.5 44 Q288 52 290 59 Q292 66 292.5 72.5 L293 79"/>
<path d="M363 0 Q351 16 344.5 24.5 Q338 33 335 39.5 Q332 46 331 54.5 Q330 63 329.5 71 L329 79"/>
<path d="M277 88 Q285 80 289.5 79.5 Q294 79 311.5 79 Q329 79 334.5 78 Q340 77 344 81 Q348 85 352 89.5 Q356 94 359 97 Q362 100 366 104 Q370 108 367.5 114 Q365 120 367.5 122.5 Q370 125 372.5 130.5 Q375 136 376.5 144 Q378 152 382 160 Q386 168 382 170 Q378 172 367.5 178.5 Q357 185 352.5 189.5 Q348 194 337 193.5 Q326 193 322.5 191.5 Q319 190 314.5 192 Q310 194 300.5 190 Q291 186 286.5 181.5 Q282 177 275.5 173 Q269 169 266 163.5 Q263 158 259 152.5 Q255 147 256 137.5 Q257 128 258.5 120.5 Q260 113 263 109.5 Q266 106 267.5 103 Q269 100 273 95 Q277 90 277 89 L277 88"/>
<path d="M200 100 Q231 108 244.5 110.5 L258 113"/>
<path d="M200 166 Q231 155 243 151 L255 147"/>
<path d="M375 136 Q400 128 415.5 122.5 Q431 117 447 111.5 Q463 106 471.5 103 L480 100"/>
<path d="M378 172 Q400 186 412 189.5 Q424 193 435.5 196.5 Q447 200 455 206.3 Q463 212.6 467.5 214.8 Q472 217 483 225.8 Q494 234.6 502 240.8 Q510 247 518 250.25 Q526 253.5 533.75 261.25 Q541.5 269 549.25 278.5 Q557 288 563.5 294 L570 300"/>
<path d="M290 188 Q278.6 200 270.8 208 Q263 216 255 225.3 Q247 234.6 239.2 244.05 Q231.4 253.5 223.7 259.75 Q216 266 208 270.75 L200 275.5"/>
<path d="M319 191 Q318.7 200 319.85 208 Q321 216 322 223.5 Q323 231 320.5 238.3 Q318 245.6 317.5 254.3 Q317 263 317 275.5 Q317 288 315.5 294 L314 300"/>
<path d="M480 97 Q510 85 518 81.5 Q526 78 541.5 77.5 Q557 77 578.5 72.5 L600 68"/>
<path d="M82 200 Q94 185 99 177 Q104 169 111.5 165 Q119 161 128.5 160 L138 159"/>
<path d="M116 200 Q126 190 132 186.5 Q138 183 143 182 Q148 181 160.5 177.5 Q173 174 186.5 169 L200 164"/>
<path d="M200 288 Q173 294 166.5 297 L160 300"/>
<path d="M491 200 Q510 217 517.9 224.2 Q525.8 231.4 528.15 238.5 Q530.5 245.6 536 257.3 L541.5 269"/>
<path d="M549 250 Q565 246.4 582.5 246 L600 245.6"/>
<path d="M0 263 L6 258"/>
</g><g stroke="#febc5a" stroke-width="3.1">
<path d="M153 0 Q155 16 154 27.5 Q153 39 151 47 Q149 55 145.25 64.5 Q141.5 74 139.25 81 Q137 88 136.5 94 Q136 100 135.5 115.5 Q135 131 136.5 140.5 Q138 150 141.5 159.5 Q145 169 146.5 175.5 Q148 182 152.5 188 Q157 194 159.5 197 Q162 200 166 209.5 Q170 219 175.5 230 Q181 241 187 253.5 Q193 266 196.5 270.5 Q200 275 204 281.5 Q208 288 212 294 L216 300"/>
<path d="M435 0 Q452 16 460 23 Q468 30 471.5 34.5 Q475 39 476.5 47 Q478 55 478.5 67 Q479 79 479.5 89.5 Q480 100 479.5 115.5 Q479 131 478.5 147 Q478 163 476.5 175.5 Q475 188 474.5 194 Q474 200 472.35 206.3 Q470.7 212.6 473.1 220.3 Q475.5 228 476.25 237.5 Q477 247 475.5 255 Q474 263 468.5 269.25 Q463 275.5 455 283.25 Q447 291 443 295.5 L439 300"/>
<path d="M0 98 Q36 97 44.5 91 Q53 85 58 79.5 Q63 74 69 70 Q75 66 81.5 65 Q88 64 95 65 Q102 66 109 68.5 Q116 71 121 74 Q126 77 130.5 81.5 Q135 86 138 86 Q141 86 147.5 90 Q154 94 155.5 97 Q157 100 161 103 Q165 106 175.5 106 Q186 106 189.5 103 Q193 100 196.5 98.5 Q200 97 204.5 98.5 L209 100"/>
<path d="M209 0 Q220 24 224 33 Q228 42 232 51 Q236 60 244 64 Q252 68 259 73.5 Q266 79 271.5 83.5 L277 88"/>
<path d="M275 0 Q282 16 282.5 26 Q283 36 285.5 44 Q288 52 290 59 Q292 66 292.5 72.5 L293 79"/>
<path d="M363 0 Q351 16 344.5 24.5 Q338 33 335 39.5 Q332 46 331 54.5 Q330 63 329.5 71 L329 79"/>
<path d="M277 88 Q285 80 289.5 79.5 Q294 79 311.5 79 Q329 79 334.5 78 Q340 77 344 81 Q348 85 352 89.5 Q356 94 359 97 Q362 100 366 104 Q370 108 367.5 114 Q365 120 367.5 122.5 Q370 125 372.5 130.5 Q375 136 376.5 144 Q378 152 382 160 Q386 168 382 170 Q378 172 367.5 178.5 Q357 185 352.5 189.5 Q348 194 337 193.5 Q326 193 322.5 191.5 Q319 190 314.5 192 Q310 194 300.5 190 Q291 186 286.5 181.5 Q282 177 275.5 173 Q269 169 266 163.5 Q263 158 259 152.5 Q255 147 256 137.5 Q257 128 258.5 120.5 Q260 113 263 109.5 Q266 106 267.5 103 Q269 100 273 95 Q277 90 277 89 L277 88"/>
<path d="M200 100 Q231 108 244.5 110.5 L258 113"/>
<path d="M200 166 Q231 155 243 151 L255 147"/>
<path d="M375 136 Q400 128 415.5 122.5 Q431 117 447 111.5 Q463 106 471.5 103 L480 100"/>
<path d="M378 172 Q400 186 412 189.5 Q424 193 435.5 196.5 Q447 200 455 206.3 Q463 212.6 467.5 214.8 Q472 217 483 225.8 Q494 234.6 502 240.8 Q510 247 518 250.25 Q526 253.5 533.75 261.25 Q541.5 269 549.25 278.5 Q557 288 563.5 294 L570 300"/>
<path d="M290 188 Q278.6 200 270.8 208 Q263 216 255 225.3 Q247 234.6 239.2 244.05 Q231.4 253.5 223.7 259.75 Q216 266 208 270.75 L200 275.5"/>
<path d="M319 191 Q318.7 200 319.85 208 Q321 216 322 223.5 Q323 231 320.5 238.3 Q318 245.6 317.5 254.3 Q317 263 317 275.5 Q317 288 315.5 294 L314 300"/>
<path d="M480 97 Q510 85 518 81.5 Q526 78 541.5 77.5 Q557 77 578.5 72.5 L600 68"/>
<path d="M82 200 Q94 185 99 177 Q104 169 111.5 165 Q119 161 128.5 160 L138 159"/>
<path d="M116 200 Q126 190 132 186.5 Q138 183 143 182 Q148 181 160.5 177.5 Q173 174 186.5 169 L200 164"/>
<path d="M200 288 Q173 294 166.5 297 L160 300"/>
<path d="M491 200 Q510 217 517.9 224.2 Q525.8 231.4 528.15 238.5 Q530.5 245.6 536 257.3 L541.5 269"/>
<path d="M549 250 Q565 246.4 582.5 246 L600 245.6"/>
<path d="M0 263 L6 258"/>
</g>
</g>
<g font-family="'Liberation Sans',sans-serif" fill="#1c1c1c" stroke="#fff" stroke-width="2" paint-order="stroke" stroke-linejoin="round" stroke-opacity=".8">
<text x="281.4" y="137.3" font-size="21.8" textLength="74.3" lengthAdjust="spacingAndGlyphs" fill="#000">Москва</text>
<text x="66.8" y="44.8" font-size="13.8" textLength="79.4" lengthAdjust="spacingAndGlyphs">Красногорск</text>
<text x="86.2" y="83.3" font-size="11" textLength="75.8" lengthAdjust="spacingAndGlyphs">Архангельское</text>
<text x="48" y="117" font-size="11" textLength="55" lengthAdjust="spacingAndGlyphs">Ильинское</text>
<text x="81" y="153.5" font-size="11" textLength="58" lengthAdjust="spacingAndGlyphs">Ромашково</text>
<text x="41.7" y="187.3" font-size="11" textLength="84" lengthAdjust="spacingAndGlyphs">Новоивановское</text>
<text x="153.8" y="215" font-size="11" textLength="42.4" lengthAdjust="spacingAndGlyphs">Заречье</text>
<text x="147.8" y="283.3" font-size="11" textLength="57" lengthAdjust="spacingAndGlyphs">Румянцево</text>
<text x="463" y="60.5" font-size="13.8" textLength="69.5" lengthAdjust="spacingAndGlyphs">Восточный</text>
<text x="514" y="89.6" font-size="13.7" textLength="65" lengthAdjust="spacingAndGlyphs">Балашиха</text>
<text x="472" y="139.3" font-size="13.7" textLength="43.6" lengthAdjust="spacingAndGlyphs">Реутов</text>
<text x="551.7" y="138.5" font-size="11">Железнодорожный</text>
<text x="487" y="220" font-size="13.8" textLength="60.3" lengthAdjust="spacingAndGlyphs">Люберцы</text>
<text x="458.2" y="266" font-size="13.7" textLength="72.8" lengthAdjust="spacingAndGlyphs">Котельники</text>
<text x="565" y="244" font-size="13.8">Томилино</text>
<text x="592.6" y="265" font-size="13.8">Красково</text>
<text x="26" y="33.8" font-size="13.8" text-anchor="end">Нахабино</text>
<text x="34.6" y="60.5" font-size="11" text-anchor="end">Слобода</text>
<text x="29" y="134.6" font-size="11" text-anchor="end">Петровское</text>
<text x="50" y="304.5" font-size="11" textLength="44" lengthAdjust="spacingAndGlyphs">Бристоль</text>
<text x="563" y="291" font-size="13.8" fill="#888">Малаховка</text>
</g>
<rect x="134.5" y="18.5" width="30" height="10.5" fill="#2b80c8" stroke="#eaf2fa" stroke-width="1"/>
<text x="149.5" y="26.6" font-family="'Liberation Sans',sans-serif" font-weight="bold" font-size="9.5" fill="#fff" text-anchor="middle" textLength="24" lengthAdjust="spacingAndGlyphs">Р-111</text>
<rect x="37.5" y="84.5" width="19.5" height="10.5" fill="#2b80c8" stroke="#eaf2fa" stroke-width="1"/>
<text x="47.25" y="92.6" font-family="'Liberation Sans',sans-serif" font-weight="bold" font-size="9.5" fill="#fff" text-anchor="middle" textLength="15" lengthAdjust="spacingAndGlyphs">М-9</text>
<rect x="119" y="110.5" width="30" height="10.5" fill="#2b80c8" stroke="#eaf2fa" stroke-width="1"/>
<text x="134" y="118.6" font-family="'Liberation Sans',sans-serif" font-weight="bold" font-size="9.5" fill="#fff" text-anchor="middle" textLength="24" lengthAdjust="spacingAndGlyphs">А-106</text>
<rect x="470.5" y="190.5" width="29.5" height="10.5" fill="#2b80c8" stroke="#eaf2fa" stroke-width="1"/>
<text x="485.25" y="198.6" font-family="'Liberation Sans',sans-serif" font-weight="bold" font-size="9.5" fill="#fff" text-anchor="middle" textLength="24" lengthAdjust="spacingAndGlyphs">Р-105</text>
<rect x="504" y="244.5" width="20" height="10" fill="#2b80c8" stroke="#eaf2fa" stroke-width="1"/>
<text x="514" y="252.1" font-family="'Liberation Sans',sans-serif" font-weight="bold" font-size="9.5" fill="#fff" text-anchor="middle" textLength="15" lengthAdjust="spacingAndGlyphs">М-5</text>
</svg><!-- zoom control -->
<div class="abs" style="left:5.5px;top:75px;width:24px;height:128px;background:rgba(140,160,182,.45);border-radius:3px 3px 0 0"></div>
<div class="abs" style="left:9px;top:103px;width:17px;height:98px;background:repeating-linear-gradient(rgba(255,255,255,.9) 0,rgba(255,255,255,.9) 1.4px,transparent 1.4px,transparent 6.9px)"></div>
<div class="abs" style="left:7px;top:78px;width:21px;height:21px;border-radius:3px;background:linear-gradient(#fff,#f2f2f2 45%,#d6d6d6);border:1px solid #8e9499;box-shadow:0 1px 2px rgba(0,0,0,.35)"></div>
<div class="abs" style="left:11.5px;top:86.5px;width:13px;height:3px;background:#2c2c2c"></div>
<div class="abs" style="left:6px;top:169px;width:23px;height:8px;border-radius:3px;background:linear-gradient(#fff,#dadada);border:1px solid #9aa0a6;box-shadow:0 1px 2px rgba(0,0,0,.4)"></div>
<!-- type selector -->
<div class="abs" style="left:516.5px;top:7.5px;width:76px;height:25px;border-radius:3px;background:linear-gradient(#fff,#f4f4f4 45%,#d8d8d8);border:1px solid #9a9a9a;border-bottom-color:#7e7e7e;box-shadow:0 1px 2px rgba(0,0,0,.3)"></div>
<div id="m1" class="t" style="left:525px;top:11px;font-size:14px;line-height:16px;color:#1a1a1a">Схема</div>
<svg style="left:576px;top:18px" width="7" height="6"><path d="M0 0 L7 0 L3.5 6 Z" fill="#2b2b2b"/></svg>
<!-- mini map -->
<div class="abs" style="left:5px;top:203px;width:130px;height:92px;background:#fdf0ed;border:1px solid #8396a6;overflow:hidden">
 <svg width="128" height="90" viewBox="649.5 423 128 90" style="left:0;top:0">
  <g fill="none" stroke="#9cc8e4" stroke-width=".7"><path d="M652 436 L660 430 L668 432 L676 428"/><path d="M660 474 L672 470 L684 476 L700 472 L712 474 L728 470 L740 462 L752 460"/><path d="M724 476 L736 488 L750 496 L756 504"/><path d="M700 508 L716 504 L730 508"/><path d="M684 438 L694 432 L700 436"/></g>
  <g fill="none" stroke="#f6b45e" stroke-width=".9" stroke-linecap="round"><path d="M714 469 L698 448 L688 435 L675 423"/><path d="M714 469 L729 441 L744 425 L746 423"/><path d="M714 469 L706 464 L690 459 L668 452 L650 450"/><path d="M714 469 L742 463 L760 458 L777 452"/><path d="M714 469 L698 484 L688 500 L680 513"/><path d="M714 469 L714 490 L716 513"/><path d="M716 472 L722 490 L728 513"/><path d="M716 470 L736 486 L750 500 L762 511"/><path d="M712 471 L696 474 L676 478 L650 478"/><path d="M714 469 L716 456 L714 446"/></g>
  <rect x="704.5" y="463.5" width="20" height="10" fill="rgba(90,110,215,.32)" stroke="#3555c8" stroke-width="1"/>
  <circle cx="714.3" cy="467" r="3.6" fill="#8e9cbc" stroke="#66749a" stroke-width=".6"/><circle cx="713.4" cy="466" r="1.5" fill="#c3cce0"/>
  <g fill="#8a8a8a" stroke="#666" stroke-width=".5"><circle cx="776.5" cy="451.6" r="2"/><circle cx="762" cy="511.5" r="2"/><circle cx="674.8" cy="423.5" r="2"/></g>
  <g font-family="'Liberation Sans',sans-serif" stroke="#fdf0ed" stroke-width="1.6" paint-order="stroke"><text x="693" y="459.9" font-size="12" fill="#1b3d5e" textLength="41.7" lengthAdjust="spacingAndGlyphs">Москва</text><text x="752.7" y="446.8" font-size="10.5" fill="#555" textLength="48" lengthAdjust="spacingAndGlyphs">Владимир</text><text x="745.3" y="506.7" font-size="10.5" fill="#555" textLength="33.5" lengthAdjust="spacingAndGlyphs">Рязань</text></g>
  <rect x="649.5" y="497" width="16" height="16" fill="#fff"/>
  <path d="M660 502 L654.5 507.5 M654.5 503.5 L654.5 507.5 L658.5 507.5" fill="none" stroke="#444" stroke-width=".9"/>
 </svg>
</div>
<!-- scale + logo + copyright -->
<div class="abs" style="left:521px;top:250px;width:72px;height:6px;background:#ffff00;border:1px solid #000"></div>
<div id="m2" class="t" style="left:540.5px;top:255.5px;font-size:26px;line-height:26px;color:#3f332b;transform:scaleX(.60);transform-origin:0 0;letter-spacing:-.5px"><span style="color:#f5281c">Я</span>ндекс</div>
<div class="abs" style="left:362.5px;top:280.5px;width:230px;height:11px;background:rgba(255,255,255,.72)"></div>
<div class="t" style="left:313px;top:280px;font-family:'DejaVu Sans',sans-serif;font-size:9.4px;line-height:12px;color:#222;word-spacing:1px"><span id="m3">© Яндекс</span></div>
<div class="t" style="left:364.3px;top:280px;font-family:'DejaVu Sans',sans-serif;font-size:9.4px;line-height:12px;color:#222"><span id="m4" style="text-decoration:underline">Ошибка на карте?</span></div>
<div class="t" style="left:463.5px;top:280px;font-family:'DejaVu Sans',sans-serif;font-size:9.4px;line-height:12px;color:#222">·</div>
<div class="t" style="left:471px;top:280px;font-family:'DejaVu Sans',sans-serif;font-size:9.4px;line-height:12px;color:#222"><span id="m5" style="text-decoration:underline">Условия использования</span></div>
</div>

<!-- footer -->
<div id="f1" class="t" style="left:103px;top:614px;font-size:14.5px;transform:scaleX(.86);transform-origin:0 0;line-height:16px;color:#222">© Моя компания 2009-2015</div>
<div id="f2" class="t" style="left:1104px;top:614px;font-size:14.5px;transform:scaleX(.86);transform-origin:0 0;line-height:16px;color:#222"><span id="f2a">Создание сайта - </span><a id="f2b">AmberSite</a></div>

<!-- top admin panel -->
<div id="panel" class="abs tex">
 <div class="ph" style="left:6px"></div>
 <div class="ph" style="left:999px"></div>
 <div class="ph" style="left:1216px"></div>
 <svg style="left:26px;top:13px" width="11" height="11" viewBox="0 0 11 11"><g fill="rgba(40,50,62,.7)"><rect x="0" y="2" width="11" height="1"/><rect x="0" y="6" width="11" height="1"/><rect x="0" y="10" width="11" height="1"/></g><g fill="#f0f3f5"><rect x="0" y="0" width="11" height="2"/><rect x="0" y="4" width="11" height="2"/><rect x="0" y="8" width="11" height="2"/></g></svg>
 <div id="p1" class="t pb" style="left:48px;top:10px;line-height:14px">Меню</div>
 <div class="btn" style="left:104px;top:4px;width:149px;height:27px"></div>
 <div id="p2" class="t pb" style="left:117px;top:10px;line-height:14px;color:#fff">Администрирование</div>
 <div class="btn" style="left:263px;top:4px;width:50px;height:27px"></div>
 <div class="abs" style="left:272px;top:11px;width:14px;height:14px;background:#d9dfe0"></div>
 <div id="p3i" class="t" style="left:276px;top:10px;font-family:'Liberation Serif',serif;font-weight:bold;font-size:14px;line-height:16px;color:#2a3442">i</div>
 <div id="p3" class="t pb" style="left:295px;top:10px;line-height:14px;color:#fff">0</div>
 <svg style="left:333px;top:9px" width="17" height="20" viewBox="0 0 17 20"><g id="rfa"><path d="M1.5 8.6 A6 6 0 0 1 12.6 5.8" fill="none" stroke="#e9eef0" stroke-width="2.6"/><path d="M16.3 2 L16.3 9.2 L9 9 Z" fill="#e9eef0"/></g><use href="#rfa" transform="rotate(180 8.4 10.1)"/></svg>
 <div id="p4" class="t pr" style="left:359px;top:12px;line-height:14px">Сбросить кеш</div>

 <div class="btn" style="left:837px;top:4px;width:79px;height:27px"></div>
 <svg style="left:847px;top:11px" width="12" height="12" viewBox="0 0 12 12"><path d="M6 0.2 C8 0.2 8.8 1.8 8.6 3.8 C8.5 5.2 8 6.2 7.6 6.8 L7.6 7.8 C8.8 8.6 11.2 8.8 11.6 10.4 L11.6 11.8 L0.4 11.8 L0.4 10.4 C0.8 8.8 3.2 8.6 4.4 7.8 L4.4 6.8 C4 6.2 3.5 5.2 3.4 3.8 C3.2 1.8 4 0.2 6 0.2 Z" fill="#e8eeee"/></svg>
 <div id="p5" class="t pb" style="left:869px;top:10px;line-height:14px;color:#fff">admin</div>
 <div id="p6" class="t pb" style="left:938px;top:12px;line-height:14px">Выйти</div>
 <!-- toggle -->
 <div class="abs" style="left:1024px;top:12px;width:34px;height:13px;border-radius:7px;background:linear-gradient(#1fa945,#27bd50);border:1px solid #1d5a30;box-shadow:0 1px 0 rgba(255,255,255,.25)"></div>
 <div class="abs" style="left:1042px;top:9px;width:18px;height:18px;border-radius:50%;background:conic-gradient(#fff,#bfc3c6 12%,#f4f4f4 25%,#b9bdc0 37%,#fff 50%,#bfc3c6 62%,#f4f4f4 75%,#b9bdc0 87%,#fff);box-shadow:0 1px 3px rgba(0,0,0,.6),inset 0 0 0 1px rgba(150,155,160,.6)"></div>
 <div id="p7" class="t pr" style="left:1069px;top:10px;line-height:14px">Режим правки включен</div>
 <svg style="left:1240px;top:17px" width="9" height="6" viewBox="0 0 9 6"><path d="M1 1.6 L9 1.6 L5 6 Z" fill="#aeb9c4"/><path d="M0 0.6 L8 0.6 L4 5 Z" fill="#343e4c"/></svg>
 <div id="p8" class="t pb" style="left:1252px;top:11px;line-height:14px;font-size:11px">Развернуть</div>
 <svg style="left:1333px;top:10px" width="16" height="16" viewBox="0 0 16 16"><path d="M1 15 L6.4 9.2" stroke="#c9d0d6" stroke-width="1.2" fill="none"/><path d="M4.6 6.4 L9.8 11.6 L11.2 10.2 L10.4 8.6 L14.4 4.8 L15.6 5.2 L11 0.6 L11.4 1.8 L7.6 5.8 L6 5 Z" fill="#bcc5cd"/></svg>
</div>

<svg width="0" height="0" style="position:absolute"><defs>
 <g id="pencil"><g transform="translate(0.2,13.8) rotate(-45)"><path d="M0 0 L4.3 -2.3 L4.3 2.3 Z" fill="#dfe4e6"/><path d="M0 0 L1.6 -0.85 L1.6 0.85 Z" fill="#aab4bc"/><rect x="5.3" y="-2.6" width="8.7" height="5.2" fill="#dfe4e6"/><rect x="5.3" y="0.6" width="8.7" height="2" fill="#c4ccd1"/><path d="M15 -2.6 L17 -2.6 A2.6 2.6 0 0 1 17 2.6 L15 2.6 Z" fill="#e6eaec"/></g></g>
 <g id="pin"><rect x="0" y="3" width="6" height="1" fill="#e8edef"/><rect x="5" y="0" width="1.2" height="7" fill="#eef2f3"/><rect x="6.2" y="2" width="4" height="4" fill="#c8d0d5"/><rect x="6.2" y="3" width="4" height="1.4" fill="#e8edef"/><rect x="10" y="1" width="1.3" height="5.4" fill="#eef2f3"/></g>
 <g id="gear"><g fill="#e2e7ea"><circle cx="7" cy="7" r="4.9"/><g id="teeth"><rect x="5.9" y="0" width="2.2" height="14" rx=".6"/><rect x="0" y="5.9" width="14" height="2.2" rx=".6"/></g><use href="#teeth" transform="rotate(45 7 7)"/></g><circle cx="7" cy="7" r="2.9" fill="#566273"/><circle cx="7" cy="7" r="1.5" fill="#dfe4e7"/></g>
 <path id="arr" d="M0 0 L5 0 L2.5 3 Z" fill="#b2bdc7"/>
</defs></svg>

<div class="tb tex" style="left:114px;top:22px;width:240px">
 <div class="hd" style="left:4px;top:4px;height:33px"></div>
 <svg style="left:20px;top:14px" width="14" height="14"><use href="#pencil"/></svg>
 <div class="lbl" id="t1" style="left:40px">Редактировать область как php</div>
 <div class="sep" style="left:213px"></div>
 <svg style="left:222px;top:17px" width="12" height="7"><use href="#pin"/></svg>
</div>

<div class="tb tex" style="left:389px;top:48px;width:271px">
 <div class="hd" style="left:4px;top:4px;height:33px"></div>
 <svg style="left:20px;top:14px" width="14" height="14"><use href="#pencil"/></svg>
 <div class="lbl" id="t2" style="left:40px">Редактировать пункты меню</div>
 <div class="sep" style="left:199px"></div>
 <svg style="left:208px;top:17px" width="12" height="7"><use href="#pin"/></svg>
 <svg style="left:233px;top:13px" width="14" height="14"><use href="#gear"/></svg>
 <svg style="left:257px;top:19px" width="5" height="3"><use href="#arr"/></svg>
</div>

<div class="tb tex" style="left:1027px;top:88px;width:240px">
 <div class="hd" style="left:4px;top:4px;height:33px"></div>
 <svg style="left:20px;top:14px" width="14" height="14"><use href="#pencil"/></svg>
 <div class="lbl" id="t3" style="left:40px">Редактировать область как text</div>
 <div class="sep" style="left:213px"></div>
 <svg style="left:222px;top:17px" width="12" height="7"><use href="#pin"/></svg>
</div>

<div class="tb tex" style="left:113px;top:164px;width:253px">
 <div class="hd" style="left:4px;top:4px;height:33px"></div>
 <svg style="left:20px;top:14px" width="14" height="14"><use href="#pencil"/></svg>
 <div class="lbl" id="t4" style="left:40px">Изменить страницу в редакторе</div>
 <svg style="left:211px;top:19px" width="5" height="3"><use href="#arr"/></svg>
 <div class="sep" style="left:226px"></div>
 <svg style="left:235px;top:17px" width="12" height="7"><use href="#pin"/></svg>
</div>

<div class="tb tex" style="left:562px;top:174px;width:88px">
 <div class="hd" style="left:4px;top:4px;height:33px"></div>
 <svg style="left:25px;top:17px" width="12" height="7"><use href="#pin"/></svg>
 <svg style="left:51px;top:13px" width="14" height="14"><use href="#gear"/></svg>
 <svg style="left:74px;top:19px" width="5" height="3"><use href="#arr"/></svg>
</div>

<div class="tb tex" style="left:103px;top:569px;width:240px">
 <div class="hd" style="left:4px;top:4px;height:33px"></div>
 <svg style="left:20px;top:14px" width="14" height="14"><use href="#pencil"/></svg>
 <div class="lbl" id="t6" style="left:40px">Редактировать область как php</div>
 <div class="sep" style="left:213px"></div>
 <svg style="left:222px;top:17px" width="12" height="7"><use href="#pin"/></svg>
</div>

</body>
</html>
